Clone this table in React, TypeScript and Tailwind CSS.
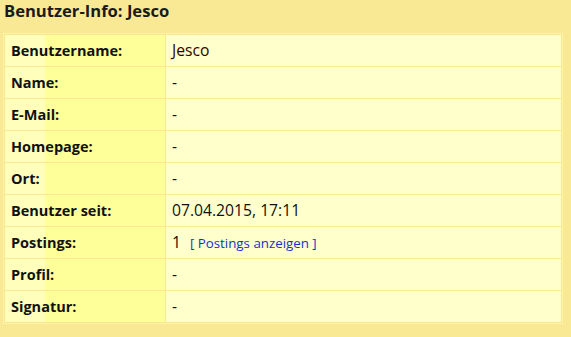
import React from "react";

type InfoRow = {
  label: string;
  value: React.ReactNode;
};

const rows: InfoRow[] = [
  { label: "Benutzername:", value: <span className="text-[#330000]">Jesco</span> },
  { label: "Name:", value: "-" },
  { label: "E-Mail:", value: "-" },
  { label: "Homepage:", value: "-" },
  { label: "Ort:", value: "-" },
  { label: "Benutzer seit:", value: "07.04.2015, 17:11" },
  {
    label: "Postings:",
    value: (
      <span>
        1
        <a href="#" className="ml-[9px] text-[13.3px] text-[#1133cc]">
          [ Postings anzeigen ]
        </a>
      </span>
    ),
  },
  { label: "Profil:", value: "-" },
  { label: "Signatur:", value: "-" },
];

const App: React.FC = () => {
  return (
    <div className="h-[337px] w-[571px] bg-[#f9e995] font-['Open_Sans',sans-serif] text-[#111]">
      <h1 className="px-[4px] pt-[1px] text-[16.6px] leading-[20px] font-bold text-[#1a1a1a]">
        Benutzer-Info: Jesco
      </h1>

      {/* user details table */}
      <div className="ml-[3px] mt-[12px] w-[560px] border border-[#fff4a8]">
        <div className="grid grid-cols-[160px_1fr] gap-px border border-[#f7e68e] bg-[#f9e995]">
          {rows.map((row) => (
            <React.Fragment key={row.label}>
              <div className="flex h-[31px] items-center bg-[linear-gradient(to_right,#ffffbb_0px,#ffffbb_40px,#ffff99_40px)] px-[6px] text-[14.5px] font-bold text-[#111]">
                {row.label}
              </div>
              <div className="flex h-[31px] items-center bg-[#ffffcc] px-[6px] text-[15.7px] text-[#111]">
                {row.value}
              </div>
            </React.Fragment>
          ))}
        </div>
      </div>
    </div>
  );
};

export default App;
